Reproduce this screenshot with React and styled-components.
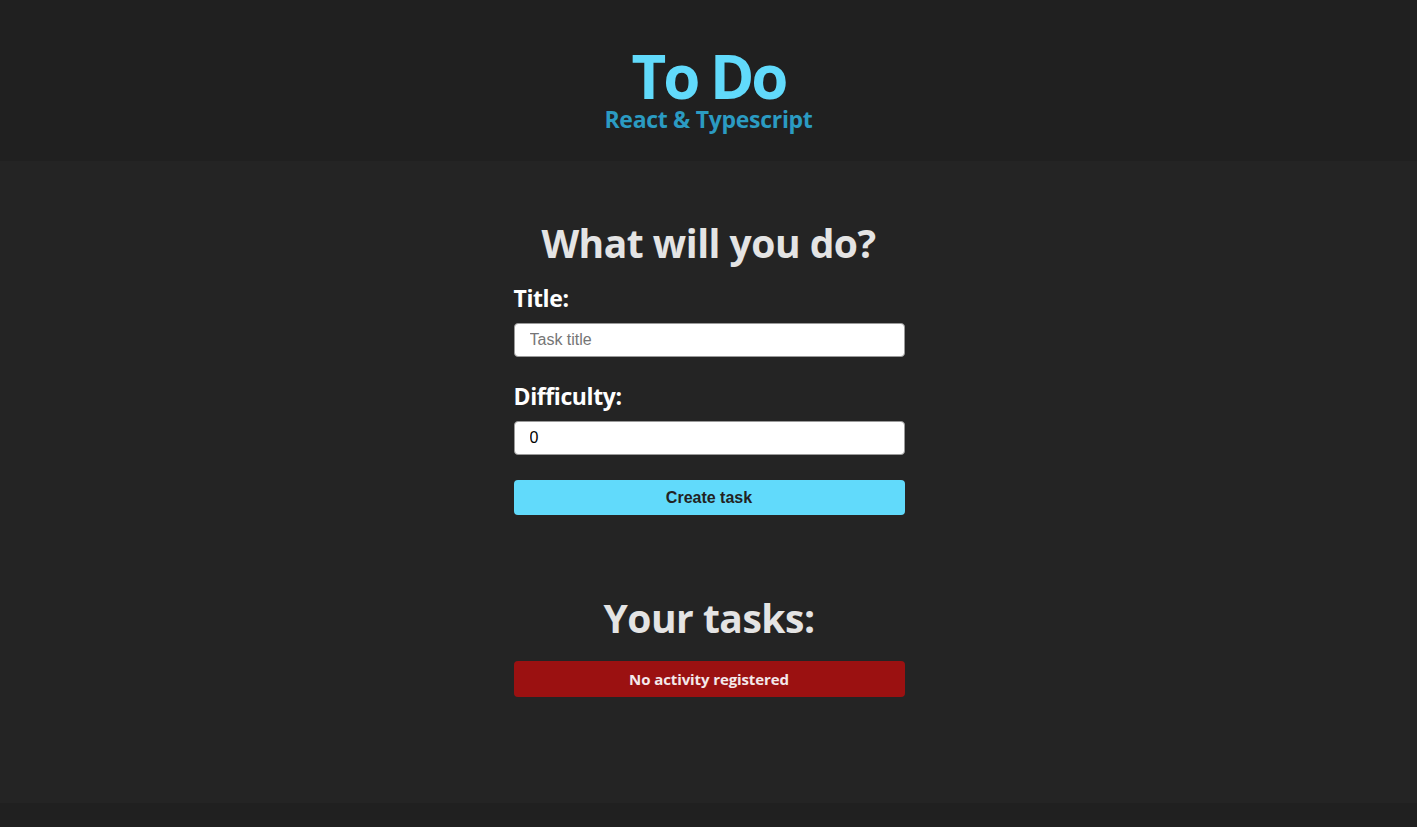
import React, { useState } from "react";
import styled, { createGlobalStyle } from "styled-components";

const Global = createGlobalStyle`
  * { box-sizing: border-box; }
  html, body { margin: 0; padding: 0; background: #202020; }
  body { font-family: "Open Sans", "Noto Sans", sans-serif; }
`;

const Page = styled.div`
  display: flex;
  flex-direction: column;
  min-height: 827px;
`;

const Header = styled.header`
  height: 161px;
  background: #202020;
  display: flex;
  flex-direction: column;
  align-items: center;
  padding-top: 46px;
`;

const Title = styled.h1`
  margin: 0;
  font-size: 60px;
  line-height: 60px;
  font-weight: 700;
  color: #61dafb;
  letter-spacing: -3px;
`;

const Subtitle = styled.h2`
  margin: 0;
  font-size: 23px;
  line-height: 26px;
  font-weight: 700;
  color: #2b9bc2;
  letter-spacing: -0.3px;
`;

const Main = styled.main`
  height: 642px;
  background: #242424;
  display: flex;
  flex-direction: column;
  align-items: center;
  padding-top: 58px;
`;

const Footer = styled.footer`
  flex: 1;
  background: #202020;
`;

const SectionTitle = styled.h2`
  margin: 0;
  font-size: 39px;
  line-height: 48px;
  font-weight: 700;
  color: #e4e4e4;
  letter-spacing: -0.5px;
  text-align: center;
  margin-bottom: ${(p) => p.$gap || 0}px;
`;

const Form = styled.form`
  width: 391px;
  margin-left: 1px;
  display: flex;
  flex-direction: column;
`;

const Field = styled.div`
  display: flex;
  flex-direction: column;
  margin-bottom: 24px;
  &:last-of-type { margin-bottom: 25px; }
`;

const Label = styled.label`
  font-size: 23px;
  line-height: 30px;
  font-weight: 700;
  color: #ffffff;
  letter-spacing: -0.4px;
  margin-bottom: 10px;
`;

const Input = styled.input`
  width: 100%;
  height: 34px;
  border: 1px solid #9a9a9a;
  border-radius: 4px;
  background: #fff;
  padding: 0 15px;
  font-family: "Liberation Sans", Arial, sans-serif;
  font-size: 16px;
  color: #000;
  outline: none;
  &::placeholder { color: #757575; }
`;

const Button = styled.button`
  width: 100%;
  height: 35px;
  border: none;
  border-radius: 4px;
  background: #61dafb;
  color: #222;
  font-family: "Liberation Sans", Arial, sans-serif;
  font-size: 16px;
  font-weight: 700;
  cursor: pointer;
`;

const TasksSection = styled.section`
  width: 391px;
  margin-left: 1px;
  display: flex;
  flex-direction: column;
  align-items: stretch;
  margin-top: 79px;
`;

const EmptyNotice = styled.div`
  height: 36px;
  border-radius: 4px;
  background: #9b1111;
  color: #f4e8ea;
  font-size: 15px;
  font-weight: 700;
  letter-spacing: -0.1px;
  display: flex;
  align-items: center;
  justify-content: center;
`;

export default function App() {
  const [title, setTitle] = useState("");
  const [difficulty, setDifficulty] = useState("0");
  return (
    <Page>
      <Global />
      <Header>
        <Title>To Do</Title>
        <Subtitle>React &amp; Typescript</Subtitle>
      </Header>
      <Main>
        <SectionTitle $gap={16}>What will you do?</SectionTitle>
        <Form onSubmit={(e) => e.preventDefault()}>
          <Field>
            <Label htmlFor="title">Title:</Label>
            <Input id="title" placeholder="Task title" value={title} onChange={(e) => setTitle(e.target.value)} />
          </Field>
          <Field>
            <Label htmlFor="difficulty">Difficulty:</Label>
            <Input id="difficulty" type="text" value={difficulty} onChange={(e) => setDifficulty(e.target.value)} />
          </Field>
          <Button type="submit">Create task</Button>
        </Form>
        <TasksSection>
          <SectionTitle $gap={19}>Your tasks:</SectionTitle>
          <EmptyNotice>No activity registered</EmptyNotice>
        </TasksSection>
      </Main>
      <Footer />
    </Page>
  );
}
